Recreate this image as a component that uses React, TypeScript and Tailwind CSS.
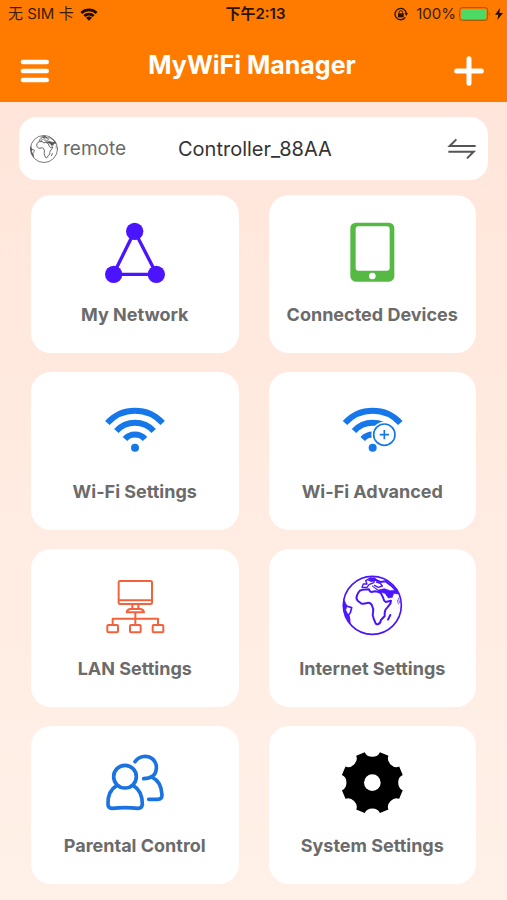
import React from "react";

const GlobeArt = () => (
  <g fill="none" stroke="currentColor" strokeLinejoin="round" strokeLinecap="round">
    <circle cx="128" cy="120" r="87" strokeWidth="5" />
    <path
      strokeWidth="6"
      d="M86 82 Q90 74 98 73 L118 72 Q120 80 126 80 L136 78 Q150 80 154 84 L160 96 Q162 106 168 110 L184 106 Q184 114 178 120 L167 134 Q164 144 165 152 L154 164 Q152 174 146 176 Q138 178 137 172 L132 160 Q127 150 130 142 Q133 130 126 118 Q120 110 112 113 Q100 117 94 114 L84 106 Q78 100 82 90 Z"
    />
    {/* Europe and Asia */}
    <path strokeWidth="4" d="M97 66 L101 56 L112 56 L108 46 L122 38 L136 40 L132 52 L118 58 L112 66 Z M134 60 L146 66 L158 62 L152 54 L140 50" />
    <path strokeWidth="6" d="M136 42 L152 50 L168 48 L184 60 L198 74" />
    <path fill="currentColor" strokeWidth="2" d="M128 62 L146 74 L164 70 L182 76 L204 74 L204 86 L192 84 L188 96 L176 98 L166 84 L150 80 Z" />
    <path stroke="none" fill="currentColor" d="M112 44 L134 36 L140 46 L124 50 Z" />
    <path strokeWidth="2" d="M206 98 L210 112 M203 104 L206 116" />
    {/* Madagascar */}
    <path strokeWidth="6" d="M182 149 L175 163" />
    {/* South America */}
    <path fill="currentColor" strokeWidth="2" d="M43 104 L52 122 L48 134 L56 150 L62 174 L48 150 L41 124 Z" />
    <path strokeWidth="5" d="M50 122 L66 127 L62 142 L57 148 L60 166" />
  </g>
);

const WifiArcs = () => (
  <g fill="none" stroke="#1677ea" strokeWidth="18">
    <path d="M52 84 A112 112 0 0 1 218 84" />
    <path d="M79 108 A76 76 0 0 1 191 108" />
    <path d="M105 132 A40 40 0 0 1 165 132" />
    <circle cx="135" cy="158" r="12" fill="#1677ea" stroke="none" />
  </g>
);

// Eight teeth with round notches between them
const gearPoint = (degrees: number) => {
  const rad = (degrees * Math.PI) / 180;
  return `${(128 + 94 * Math.sin(rad)).toFixed(1)} ${(114 - 94 * Math.cos(rad)).toFixed(1)}`;
};

const gearPath =
  [0, 45, 90, 135, 180, 225, 270, 315]
    .map((a) => `${a === 0 ? "M" : "L"}${gearPoint(a - 14)} A24 20 ${a} 0 0 ${gearPoint(a + 14)}`)
    .join(" ") + " Z";

const tiles = [
  {
    title: "My Network",
    viewBox: "45 36 180 180",
    art: (
      <g fill="#4a14ff" stroke="#4a14ff">
        <path d="M134 64 L70 193 H200 Z" fill="none" strokeWidth="10" />
        <circle cx="134" cy="64" r="26" stroke="none" />
        <circle cx="71" cy="193" r="26" stroke="none" />
        <circle cx="199" cy="193" r="26" stroke="none" />
      </g>
    ),
  },
  {
    title: "Connected Devices",
    viewBox: "37 36 180 180",
    art: (
      <>
        <rect x="62" y="38" width="132" height="177" rx="16" fill="#56b944" />
        <rect x="78" y="49" width="102" height="133" rx="8" fill="#fff" />
        <circle cx="128" cy="198" r="10" fill="#fff" />
      </>
    ),
  },
  {
    title: "Wi-Fi Settings",
    viewBox: "45 12 180 180",
    art: <WifiArcs />,
  },
  {
    title: "Wi-Fi Advanced",
    viewBox: "43 12 180 180",
    art: (
      <>
        <WifiArcs />
        <circle cx="170" cy="119" r="39" fill="#fff" />
        <circle cx="170" cy="119" r="32" fill="#fff" stroke="#1677ea" strokeWidth="5" />
        <path d="M170 105 V133 M156 119 H184" stroke="#1677ea" strokeWidth="5" />
      </>
    ),
  },
  {
    title: "LAN Settings",
    viewBox: "45 17 180 180",
    art: (
      <g fill="none" stroke="#f4623c" strokeWidth="6" strokeLinejoin="round">
        <rect x="86" y="32" width="100" height="69" rx="4" />
        <path d="M86 90 H186" />
        <path d="M127 102 V115 M145 102 V115" />
        <path d="M110 126 Q112 116 122 116 H150 Q160 116 162 126 Z" />
        <path d="M136 127 V163 M68 163 V145 H204 V163" />
        <rect x="52" y="164" width="32" height="22" rx="3" />
        <rect x="120" y="164" width="32" height="22" rx="3" />
        <rect x="188" y="164" width="32" height="22" rx="3" />
      </g>
    ),
  },
  {
    title: "Internet Settings",
    viewBox: "37 32 180 180",
    art: (
      <g className="text-[#4a14ff]">
        <GlobeArt />
      </g>
    ),
  },
  {
    title: "Parental Control",
    viewBox: "45 24 180 180",
    art: (
      <g fill="none" stroke="#1a73e0" strokeWidth="11" strokeLinecap="round" strokeLinejoin="round">
        <circle cx="105" cy="95" r="34" />
        <path d="M81 121 C60 133 53 155 54 178 Q54 190 66 190 Q105 186 144 190 Q156 190 157 178 C157 155 150 133 129 121" />
        <path d="M135 50 C147 32 173 29 188 42 C204 56 202 84 187 94 C180 99 171 101 161 101" />
        <path d="M187 97 C206 106 215 127 216 150 Q216 163 203 163 H176" />
      </g>
    ),
  },
  {
    title: "System Settings",
    viewBox: "37 25 180 180",
    art: (
      <>
        <path d={gearPath} />
        <circle cx="128" cy="114" r="25" fill="#fff" />
      </>
    ),
  },
];

const StatusBar = () => (
  <div className="grid grid-cols-3 items-center h-7 pl-2 pr-1 text-[15px] leading-5 text-[#3b1c00]">
    <div className="flex items-center gap-[6px] whitespace-nowrap">
      <span>无 SIM 卡</span>
      <svg className="w-[18px] h-[13px]" viewBox="0 0 54 39" fill="none" stroke="#1f0e00" strokeWidth="8" aria-hidden="true">
        <path d="M4 15 A33 33 0 0 1 50 15" />
        <path d="M13 24 A20 20 0 0 1 41 24" />
        <path d="M27 38 L18 29 Q27 22 36 29 Z" fill="#1f0e00" stroke="none" />
      </svg>
    </div>
    <span className="text-center font-semibold text-[#2b1400]">下午2:13</span>
    <div className="flex items-center justify-end whitespace-nowrap">
      <svg className="w-[14px] h-[14px] mr-2" viewBox="0 0 42 42" fill="none" stroke="#2b1400" strokeWidth="4" aria-hidden="true">
        <path d="M34 31 A17 17 0 1 1 37 19" />
        <path d="M31 18 H42 L37 27 Z" fill="#2b1400" stroke="none" />
        <rect x="12" y="19" width="17" height="12" fill="#2b1400" stroke="none" />
        <path d="M15 20 V16 Q15 11 20 11 Q26 11 26 16 V20" strokeWidth="3" />
      </svg>
      <span className="mr-[3px]">100%</span>
      <svg className="w-[32px] h-[14px] mr-1" viewBox="0 0 96 42" aria-hidden="true">
        <rect x="2" y="2" width="84" height="38" rx="8" fill="none" stroke="#a65200" strokeWidth="3" />
        <rect x="6" y="6" width="76" height="30" rx="4" fill="#4cd964" />
        <path d="M90 15 Q95 21 90 27 Z" fill="#a65200" />
      </svg>
      <svg className="w-[8px] h-[12px]" viewBox="0 0 24 36" fill="#1f0e00" aria-hidden="true">
        <path d="M15 0 L0 20 H10 L7 36 L24 15 H13 Z" />
      </svg>
    </div>
  </div>
);

const App = () => {
  return (
    <div className="min-h-screen bg-linear-to-b from-[#ffe4d9] to-[#fff1e8] font-['Inter','Noto_Sans_CJK_SC',sans-serif]">
      <header className="bg-[#ff7b00]">
        <StatusBar />
        <nav className="flex items-center justify-between h-[74px] pl-5 pr-[23px]">
          <button type="button" aria-label="Menu" className="mt-3">
            <svg className="w-[30px] h-[30px]" viewBox="0 0 90 90" stroke="#fff" strokeWidth="14" strokeLinecap="round">
              <path d="M9 18 H80 M9 45 H80 M9 72 H80" />
            </svg>
          </button>
          <h1 className="text-[25px] leading-8 font-bold text-white">MyWiFi Manager</h1>
          <button type="button" aria-label="Add" className="mt-3">
            <svg className="w-[30px] h-[30px]" viewBox="0 0 90 90" stroke="#fff" strokeWidth="15" strokeLinecap="round">
              <path d="M8 45 H82 M45 8 V82" />
            </svg>
          </button>
        </nav>
      </header>

      <main className="pt-[15px] pb-4">
        <section className="mx-[19px] h-[63px] px-[11px] flex items-center bg-white rounded-[18px]">
          <svg className="w-7 h-7 text-[#555555]" viewBox="38 30 180 180" aria-hidden="true">
            <GlobeArt />
          </svg>
          <span className="w-[115px] pl-[5px] text-[19px] leading-6 text-[#6b6b6b]">remote</span>
          <span className="flex-1 pl-[5px] text-[20px] leading-6 text-[#333333]">Controller_88AA</span>
          <button type="button" aria-label="Switch controller">
            <svg className="w-[30px] h-[22px]" viewBox="0 0 90 66" fill="none" stroke="#555555" strokeWidth="6">
              <path d="M86 24 H8 L28 4" />
              <path d="M4 41 H80 L60 61" />
            </svg>
          </button>
        </section>

        {/* Feature tiles */}
        <section className="grid grid-cols-2 gap-x-[30px] gap-y-[19px] px-[31px] mt-[15px]">
          {tiles.map((tile) => (
            <button
              key={tile.title}
              type="button"
              className="flex flex-col items-center h-[158px] pt-[27px] bg-white rounded-[20px]"
            >
              <svg className="w-[60px] h-[60px] overflow-visible" viewBox={tile.viewBox} aria-hidden="true">
                {tile.art}
              </svg>
              <span className="mt-[19px] text-[18px] leading-7 font-bold text-[#6b6b6b] whitespace-nowrap">
                {tile.title}
              </span>
            </button>
          ))}
        </section>
      </main>
    </div>
  );
};

export default App;
